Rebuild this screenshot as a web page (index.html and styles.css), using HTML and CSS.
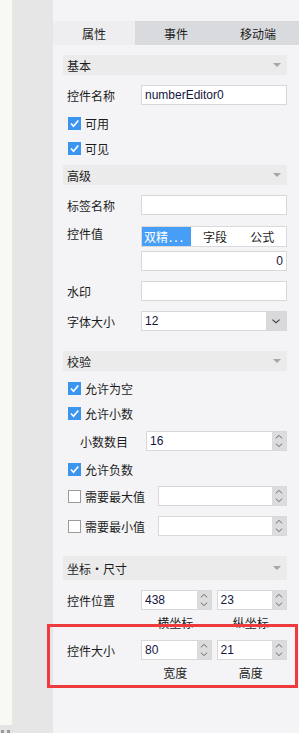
FILE: index.html
```html
<!DOCTYPE html>
<html lang="zh-CN">
<head>
<meta charset="utf-8">
<title>属性面板</title>
<link rel="stylesheet" href="styles.css">
</head>
<body>
<div class="app">
  <div class="strip"><div class="strip-top"></div><div class="strip-foot"><span class="dot"></span><span class="dot"></span></div></div>
  <div class="gutter"></div>
  <div class="panel">
    <div class="tabs">
      <div class="tab active">属性</div>
      <div class="tab">事件</div>
      <div class="tab">移动端</div>
    </div>
    <div class="content">
      <div class="sec first"><span>基本</span><i class="caret"></i></div>
      <div class="row mt10"><div class="label">控件名称</div><div class="input"><span class="val">numberEditor0</span></div></div>
      <div class="cbrow mt6"><span class="cb on"><svg viewBox="0 0 13 13"><path d="M3 6.5 L5.5 9.2 L10.3 3.5" fill="none" stroke="#fff" stroke-width="1.6"/></svg></span>可用</div>
      <div class="cbrow"><span class="cb on"><svg viewBox="0 0 13 13"><path d="M3 6.5 L5.5 9.2 L10.3 3.5" fill="none" stroke="#fff" stroke-width="1.6"/></svg></span>可见</div>

      <div class="sec mt4"><span>高级</span><i class="caret"></i></div>
      <div class="row mt10"><div class="label">标签名称</div><div class="input"></div></div>
      <div class="row2 mt11">
        <div class="label top">控件值</div>
        <div class="field">
          <div class="seg"><div class="seg-item sel">双精<span class="dots">...</span></div><div class="seg-item">字段</div><div class="seg-item">公式</div></div>
          <div class="input right mt4"><span class="val">0</span></div>
        </div>
      </div>
      <div class="row mt10"><div class="label">水印</div><div class="input"></div></div>
      <div class="row mt10"><div class="label">字体大小</div><div class="select"><span class="val">12</span><span class="sel-btn"><svg viewBox="0 0 20 20"><path d="M6 8.5 L10 12 L14 8.5" fill="none" stroke="#444" stroke-width="1.3"/></svg></span></div></div>

      <div class="sec mt20"><span>校验</span><i class="caret"></i></div>
      <div class="cbrow mt5"><span class="cb on"><svg viewBox="0 0 13 13"><path d="M3 6.5 L5.5 9.2 L10.3 3.5" fill="none" stroke="#fff" stroke-width="1.6"/></svg></span>允许为空</div>
      <div class="cbrow"><span class="cb on"><svg viewBox="0 0 13 13"><path d="M3 6.5 L5.5 9.2 L10.3 3.5" fill="none" stroke="#fff" stroke-width="1.6"/></svg></span>允许小数</div>
      <div class="row mt5"><div class="label sub">小数数目</div>
        <div class="spin"><span class="val">16</span><span class="spin-btn"><svg viewBox="0 0 14 20"><path d="M3.5 7 L7 3.8 L10.5 7 M3.5 13 L7 16.2 L10.5 13" fill="none" stroke="#6a6a6a" stroke-width="1.1"/></svg></span></div>
      </div>
      <div class="cbrow mt6"><span class="cb on"><svg viewBox="0 0 13 13"><path d="M3 6.5 L5.5 9.2 L10.3 3.5" fill="none" stroke="#fff" stroke-width="1.6"/></svg></span>允许负数</div>
      <div class="row mt4"><div class="label wide"><span class="cb"></span>需要最大值</div>
        <div class="spin"><span class="val"></span><span class="spin-btn"><svg viewBox="0 0 14 20"><path d="M3.5 7 L7 3.8 L10.5 7 M3.5 13 L7 16.2 L10.5 13" fill="none" stroke="#6a6a6a" stroke-width="1.1"/></svg></span></div>
      </div>
      <div class="row mt10"><div class="label wide"><span class="cb"></span>需要最小值</div>
        <div class="spin"><span class="val"></span><span class="spin-btn"><svg viewBox="0 0 14 20"><path d="M3.5 7 L7 3.8 L10.5 7 M3.5 13 L7 16.2 L10.5 13" fill="none" stroke="#6a6a6a" stroke-width="1.1"/></svg></span></div>
      </div>

      <div class="sec tall mt20"><span>坐标・尺寸</span><i class="caret"></i></div>
      <div class="row mt10"><div class="label">控件位置</div>
        <div class="pair">
          <div class="spin"><span class="val">438</span><span class="spin-btn"><svg viewBox="0 0 14 20"><path d="M3.5 7 L7 3.8 L10.5 7 M3.5 13 L7 16.2 L10.5 13" fill="none" stroke="#6a6a6a" stroke-width="1.1"/></svg></span></div>
          <div class="spin"><span class="val">23</span><span class="spin-btn"><svg viewBox="0 0 14 20"><path d="M3.5 7 L7 3.8 L10.5 7 M3.5 13 L7 16.2 L10.5 13" fill="none" stroke="#6a6a6a" stroke-width="1.1"/></svg></span></div>
        </div>
      </div>
      <div class="subrow"><div class="label"></div><div class="pair"><span class="cap">横坐标</span><span class="cap">纵坐标</span></div></div>
      <div class="row mt8"><div class="label">控件大小</div>
        <div class="pair">
          <div class="spin"><span class="val">80</span><span class="spin-btn"><svg viewBox="0 0 14 20"><path d="M3.5 7 L7 3.8 L10.5 7 M3.5 13 L7 16.2 L10.5 13" fill="none" stroke="#6a6a6a" stroke-width="1.1"/></svg></span></div>
          <div class="spin"><span class="val">21</span><span class="spin-btn"><svg viewBox="0 0 14 20"><path d="M3.5 7 L7 3.8 L10.5 7 M3.5 13 L7 16.2 L10.5 13" fill="none" stroke="#6a6a6a" stroke-width="1.1"/></svg></span></div>
        </div>
      </div>
      <div class="subrow"><div class="label"></div><div class="pair"><span class="cap">宽度</span><span class="cap">高度</span></div></div>
    </div>
  </div>
  <div class="highlight"></div>
</div>
</body>
</html>
```

FILE: styles.css
```css
* { box-sizing: border-box; }
html, body { margin: 0; padding: 0; }
body {
  width: 299px;
  height: 733px;
  overflow: hidden;
  font-family: "Noto Sans CJK SC", "Liberation Sans", sans-serif;
  font-size: 12px;
  color: #1c1c1c;
}
.app {
  position: relative;
  display: flex;
  width: 299px;
  height: 733px;
}
.strip {
  width: 13px;
  display: flex;
  flex-direction: column;
  background: #e4e4e4;
}
.strip-top {
  height: 725px;
  background: #f8f8f4;
  border-right: 1px solid #ece7d6;
}
.strip-foot {
  display: flex;
  gap: 3px;
  padding: 5px 0 0 1px;
}
.dot {
  width: 3px;
  height: 3px;
  background: #9a9a9a;
}
.gutter {
  width: 40px;
  background: #e6e6e6;
}
.panel {
  flex: 1;
  background: #f4f4f6;
  padding-top: 21px;
}
.tabs {
  display: flex;
  height: 24px;
}
.tab {
  flex: 1;
  display: flex;
  align-items: center;
  justify-content: center;
  background: #d9dadd;
  font-size: 12px;
}
.tab.active { background: #eeeef1; }
.content {
  padding: 0 12px 0 10px;
}
.sec {
  height: 20px;
  background: #ebebeb;
  display: flex;
  align-items: center;
  justify-content: space-between;
  padding: 0 6px 0 4px;
}
.sec.first { margin-top: 10px; }
.sec.tall { height: 24px; }
.caret {
  width: 0;
  height: 0;
  border-left: 4px solid transparent;
  border-right: 4px solid transparent;
  border-top: 4px solid #a6a6a6;
}
.mt4 { margin-top: 4px; }
.mt5 { margin-top: 5px; }
.mt6 { margin-top: 6px; }
.mt8 { margin-top: 8px; }
.mt10 { margin-top: 10px; }
.mt11 { margin-top: 11px; }
.mt20 { margin-top: 20px; }
.row {
  display: flex;
  align-items: center;
  height: 20px;
}
.row2 {
  display: flex;
  align-items: flex-start;
}
.label {
  width: 78px;
  flex: none;
  padding-left: 4px;
  display: flex;
  align-items: center;
  white-space: nowrap;
}
.label.top { padding-top: 0; line-height: 16px; }
.label.sub { width: 83px; padding-left: 17px; }
.label.wide { width: 95px; padding-left: 5px; gap: 4px; }
.field { flex: 1; }
.input, .select, .spin {
  flex: 1;
  height: 20px;
  background: #fff;
  border: 1px solid #d8d8d8;
  display: flex;
  align-items: center;
}
.input.right { justify-content: flex-end; }
.val {
  flex: 1;
  font-family: "Liberation Sans", Arial, sans-serif;
  font-size: 12px;
  color: #151540;
  padding-left: 3px;
  white-space: nowrap;
}
.input.right .val { text-align: right; padding-right: 3px; }
.select { height: 20px; }
.sel-btn {
  width: 20px;
  height: 18px;
  background: #d9d9dc;
}
.sel-btn svg, .spin-btn svg { display: block; width: 100%; height: 100%; }
.spin-btn {
  width: 14px;
  height: 18px;
  background: #dcdcde;
  flex: none;
}
.seg {
  height: 21px;
  display: flex;
  background: #fff;
  border: 1px solid #dadada;
}
.seg-item {
  flex: 1;
  display: flex;
  align-items: center;
  justify-content: center;
  white-space: nowrap;
}
.seg-item.sel {
  background: #479ef7;
  color: #fff;
  justify-content: flex-start;
  padding-left: 2px;
}
.dots { letter-spacing: 2px; padding-left: 1px; }
.cbrow {
  height: 25px;
  display: flex;
  align-items: center;
  padding-left: 5px;
  gap: 4px;
}
.cb {
  width: 13px;
  height: 13px;
  flex: none;
  background: #fff;
  border: 1px solid #9b9b9b;
  display: inline-block;
}
.cb.on {
  background: #3b95ef;
  border: none;
}
.cb svg { display: block; width: 13px; height: 13px; }
.pair {
  flex: 1;
  display: flex;
  gap: 5px;
}
.subrow {
  display: flex;
  height: 20px;
  margin-top: 2px;
  align-items: center;
}
.cap {
  flex: 1;
  text-align: center;
  padding-right: 2px;
}
.highlight {
  position: absolute;
  left: 47px;
  top: 624px;
  width: 251px;
  height: 64px;
  border: 3px solid #ef3b3d;
}
```
